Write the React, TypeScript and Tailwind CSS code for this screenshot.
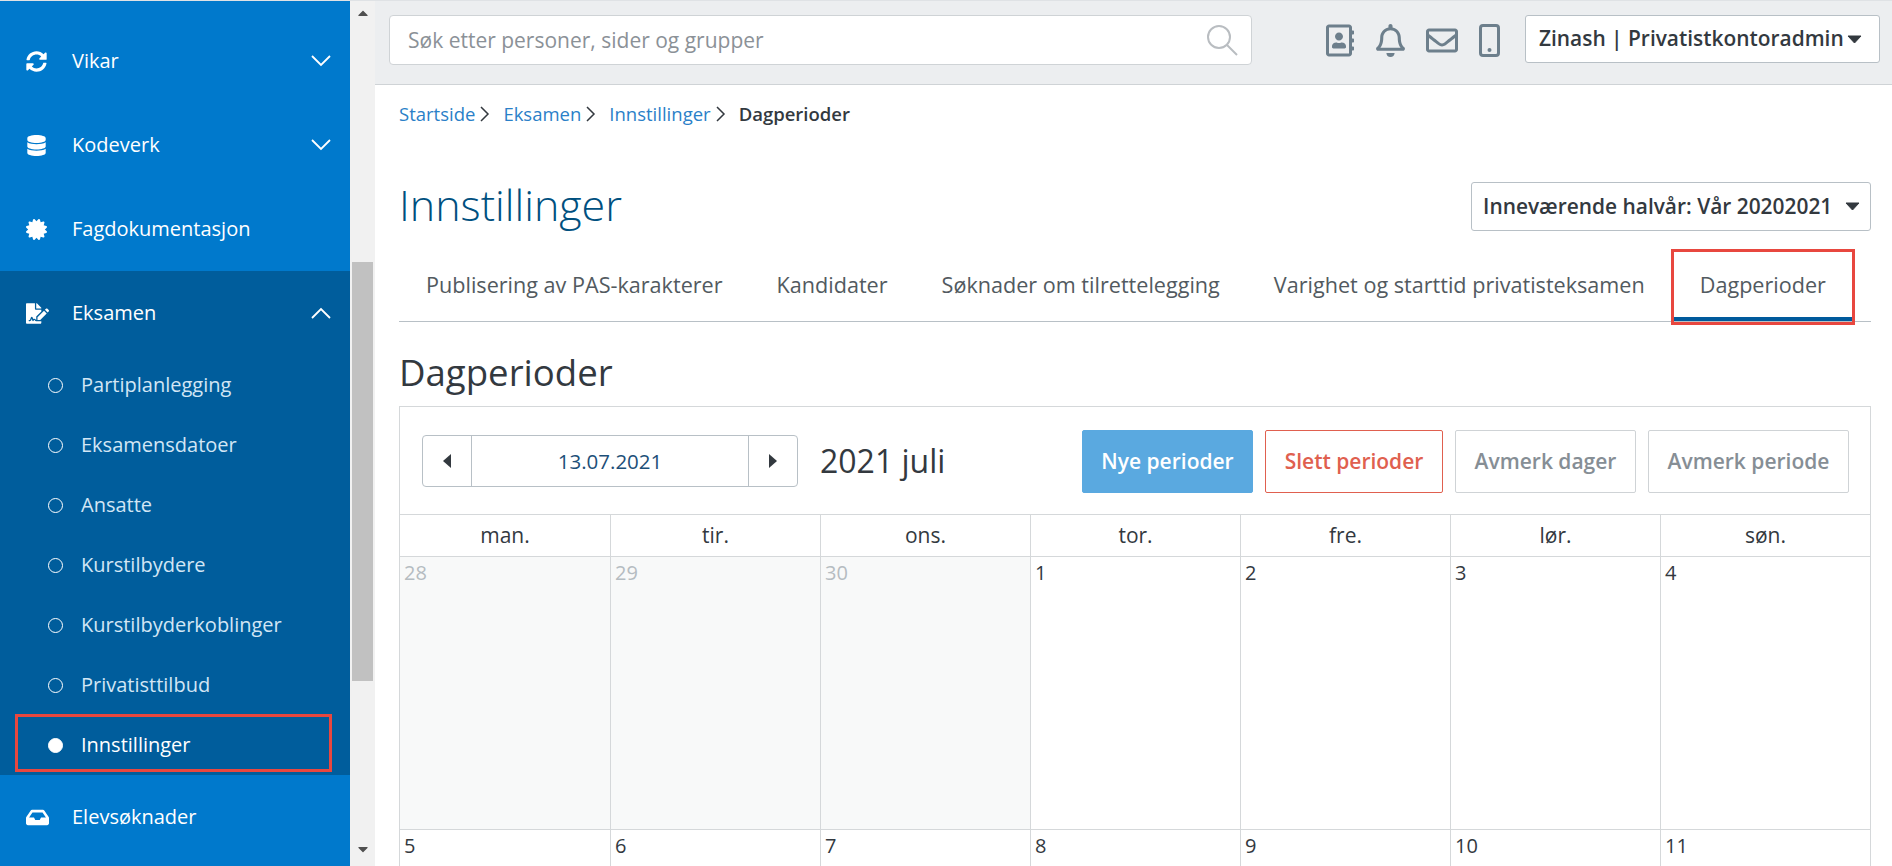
import React from "react";
import { FaSyncAlt, FaDatabase, FaCertificate, FaFileSignature, FaInbox, FaRegAddressBook, FaRegBell, FaRegEnvelope, FaCaretDown } from "react-icons/fa";

const font = { fontFamily: '"Open Sans", "Noto Sans", sans-serif' };

function Chevron({ up }: { up?: boolean }) {
  return (
    <svg width="20" height="12" viewBox="0 0 20 12" fill="none" stroke="#fff" strokeWidth="1.8" className="shrink-0">
      <polyline points={up ? "1,11 10,2 19,11" : "1,1 10,10 19,1"} />
    </svg>
  );
}

function Caret() {
  return (
    <svg width="15" height="9" viewBox="0 0 15 9" fill="#33393f" stroke="#33393f" strokeWidth="1" strokeLinejoin="round" className="shrink-0">
      <polygon points="1,1 14,1 7.5,8" />
    </svg>
  );
}

function Tri({ right }: { right?: boolean }) {
  return (
    <svg width="8" height="14" viewBox="0 0 8 14" fill="#33393f">
      <polygon points={right ? "0,0 8,7 0,14" : "8,0 0,7 8,14"} />
    </svg>
  );
}

function Side({ icon, label, chev, dark }: { icon: React.ReactNode; label: string; chev?: "up" | "down"; dark?: boolean }) {
  return (
    <div className={`flex h-[84px] items-center pl-[26px] pr-[19px] text-white ${dark ? "bg-[#005d9c]" : ""}`}>
      <div className="flex w-[46px] shrink-0 items-center">{icon}</div>
      <span className="flex-1 text-[20px]">{label}</span>
      {chev && <Chevron up={chev === "up"} />}
    </div>
  );
}

function Sub({ label, active }: { label: string; active?: boolean }) {
  return (
    <div className="relative flex h-[60px] items-center pl-[48px]">
      <span className={`h-[15px] w-[15px] rounded-full border border-white ${active ? "bg-white" : ""}`} />
      <span className={`ml-[18px] text-[20px] ${active ? "text-white" : "text-[#d2e6f5]"}`}>{label}</span>
      {active && <div className="absolute left-[15px] -top-[1px] h-[58px] w-[317px] border-[3px] border-[#e8473f]" />}
    </div>
  );
}

function Crumb({ label, last }: { label: string; last?: boolean }) {
  return (
    <>
      <span className={last ? "font-semibold text-[#33393f]" : "text-[#2a80c8]"}>{label}</span>
      {!last && (
        <svg width="10" height="16" viewBox="0 0 10 16" fill="none" stroke="#33393f" strokeWidth="1.5" className="ml-[5px] mr-[13px]">
          <polyline points="1,1 8,8 1,15" />
        </svg>
      )}
    </>
  );
}

function Btn({ label, cls }: { label: string; cls: string }) {
  return <button className={`flex h-[63px] items-center justify-center rounded-[2px] border text-[21px] font-semibold ${cls}`}>{label}</button>;
}

const wk1 = ["28", "29", "30", "1", "2", "3", "4"];
const wk2 = ["5", "6", "7", "8", "9", "10", "11"];
const days = ["man.", "tir.", "ons.", "tor.", "fre.", "lør.", "søn."];

export default function App() {
  return (
    <div style={font} className="flex h-[866px] w-[1892px] overflow-hidden border-t border-[#dfe2e5] bg-white text-[#33393f]">
      <aside className="h-full w-[350px] shrink-0 bg-[#0079cc] pt-[18px]">
        <Side icon={<FaSyncAlt size={21} />} label="Vikar" chev="down" />
        <Side icon={<FaDatabase size={21} />} label="Kodeverk" chev="down" />
        <Side icon={<FaCertificate size={21} />} label="Fagdokumentasjon" />
        <Side icon={<FaFileSignature size={23} />} label="Eksamen" chev="up" dark />
        <div className="bg-[#005d9c]">
          <Sub label="Partiplanlegging" />
          <Sub label="Eksamensdatoer" />
          <Sub label="Ansatte" />
          <Sub label="Kurstilbydere" />
          <Sub label="Kurstilbyderkoblinger" />
          <Sub label="Privatisttilbud" />
          <Sub label="Innstillinger" active />
        </div>
        <Side icon={<FaInbox size={23} />} label="Elevsøknader" />
      </aside>

      <div className="flex h-full w-[25px] shrink-0 flex-col items-center bg-[#f1f1f1]">
        <FaCaretDown size={16} className="mt-[5px] rotate-180 text-[#505050]" />
        <div className="mt-[240px] h-[419px] w-[21px] bg-[#c1c1c1]" />
        <FaCaretDown size={16} className="mt-[160px] text-[#505050]" />
      </div>

      <main className="min-w-0 flex-1">
        <header className="flex h-[84px] items-start border-b border-[#cfd3d6] bg-[#eceef0] pl-[14px] pt-[14px]">
          <div className="flex h-[50px] w-[863px] items-center justify-between rounded-[4px] border border-[#cfd3d6] bg-white pl-[18px] pr-[13px]">
            <span className="pt-[1px] text-[21px] text-[#8b9197]">Søk etter personer, sider og grupper</span>
            <svg width="32" height="32" viewBox="0 0 32 32" fill="none" stroke="#b9bdc1" strokeWidth="2">
              <circle cx="13" cy="13" r="11" />
              <line x1="21" y1="21" x2="31" y2="31" />
            </svg>
          </div>
          <div className="ml-[74px] flex h-[50px] items-center text-[#6d7f8c]">
            <FaRegAddressBook size={33} className="w-[28px]" />
            <FaRegBell size={33} className="ml-[22px] w-[29px]" />
            <FaRegEnvelope size={33} className="ml-[21px] w-[32px]" />
            <svg width="21" height="33" viewBox="0 0 21 33" fill="none" className="ml-[21px]">
              <rect x="1.5" y="1.5" width="18" height="30" rx="2.5" stroke="currentColor" strokeWidth="3" />
              <circle cx="10.5" cy="26" r="2" fill="currentColor" />
            </svg>
          </div>
          <div className="ml-[25px] flex h-[48px] w-[355px] items-center justify-between rounded-[3px] border border-[#b8c0c6] bg-white pl-[13px] pr-[17px] text-[20.9px] font-semibold whitespace-nowrap">
            <span>Zinash | Privatistkontoradmin</span>
            <Caret />
          </div>
        </header>

        <div className="pl-[24px] pr-[21px]">
          <div className="flex h-[56px] items-center pt-[1px] text-[18.5px]">
            <Crumb label="Startside" />
            <Crumb label="Eksamen" />
            <Crumb label="Innstillinger" />
            <Crumb label="Dagperioder" last />
          </div>

          <div className="flex h-[109px] items-start justify-between pt-[41px]">
            <h1 className="text-[43px] leading-[46px] font-light text-[#00507f]">Innstillinger</h1>
            <div className="flex h-[49px] w-[400px] items-center justify-between rounded-[3px] border border-[#b8c0c6] pl-[11px] pr-[10px] text-[20.9px] font-semibold whitespace-nowrap">
              <span>Inneværende halvår: Vår 20202021</span>
              <Caret />
            </div>
          </div>

          <nav className="flex h-[72px] items-stretch border-b border-[#b8c0c6] text-[21.6px] text-[#525a60]">
            <div className="flex items-center px-[27px] pb-[1px]">Publisering av PAS-karakterer</div>
            <div className="flex items-center px-[27px] pb-[1px]">Kandidater</div>
            <div className="flex items-center px-[27px] pb-[1px]">Søknader om tilrettelegging</div>
            <div className="flex items-center px-[27px] pb-[1px]">Varighet og starttid privatisteksamen</div>
            <div className="relative ml-[1px] flex items-center border-b-[4px] border-[#005a9c] px-[27px] pt-[3px]">
              Dagperioder
              <div className="absolute -left-[2px] -right-[2px] -bottom-[8px] -top-[1px] border-[3px] border-[#e8473f]" />
            </div>
          </nav>

          <h2 className="mt-[25px] text-[36.6px] leading-[50px] font-normal text-[#33393f]">Dagperioder</h2>

          <section className="mt-[9px] border border-[#d5d8da]">
            <div className="flex h-[107px] items-start pl-[22px] pr-[21px] pt-[23px]">
              <div className="mt-[5px] flex h-[52px] w-[376px] rounded-[4px] border border-[#b8c0c6]">
                <div className="flex w-[49px] items-center justify-center border-r border-[#b8c0c6]"><Tri /></div>
                <div className="flex flex-1 items-center justify-center text-[20.5px] text-[#1d4f78]">13.07.2021</div>
                <div className="flex w-[49px] items-center justify-center border-l border-[#b8c0c6]"><Tri right /></div>
              </div>
              <div className="ml-[22px] mt-[5px] flex h-[52px] items-center text-[32px]">2021 juli</div>
              <div className="ml-auto flex gap-[12px]">
                <Btn label="Nye perioder" cls="w-[171px] border-[#5aa9e0] bg-[#5aa9e0] text-white" />
                <Btn label="Slett perioder" cls="w-[178px] border-[#e0604f] text-[#e0604f]" />
                <Btn label="Avmerk dager" cls="w-[181px] border-[#cfd3d6] text-[#868e95]" />
                <Btn label="Avmerk periode" cls="w-[201px] border-[#cfd3d6] text-[#868e95]" />
              </div>
            </div>
            <div className="grid grid-cols-7">
              {days.map((d, i) => (
                <div key={d} className={`flex h-[43px] items-center justify-center border-y border-[#d5d8da] text-[21px] ${i ? "border-l" : ""}`}>{d}</div>
              ))}
              {wk1.map((d, i) => (
                <div key={d} className={`h-[272px] border-[#d5d8da] pl-[4px] pt-[1px] text-[20px] ${i ? "border-l" : ""} ${i < 3 ? "bg-[#f8f9f9] text-[#b5bcc1]" : ""}`}>{d}</div>
              ))}
              {wk2.map((d, i) => (
                <div key={d} className={`h-[60px] border-t border-[#d5d8da] pl-[4px] pt-[1px] text-[20px] ${i ? "border-l" : ""}`}>{d}</div>
              ))}
            </div>
          </section>
        </div>
      </main>
    </div>
  );
}
